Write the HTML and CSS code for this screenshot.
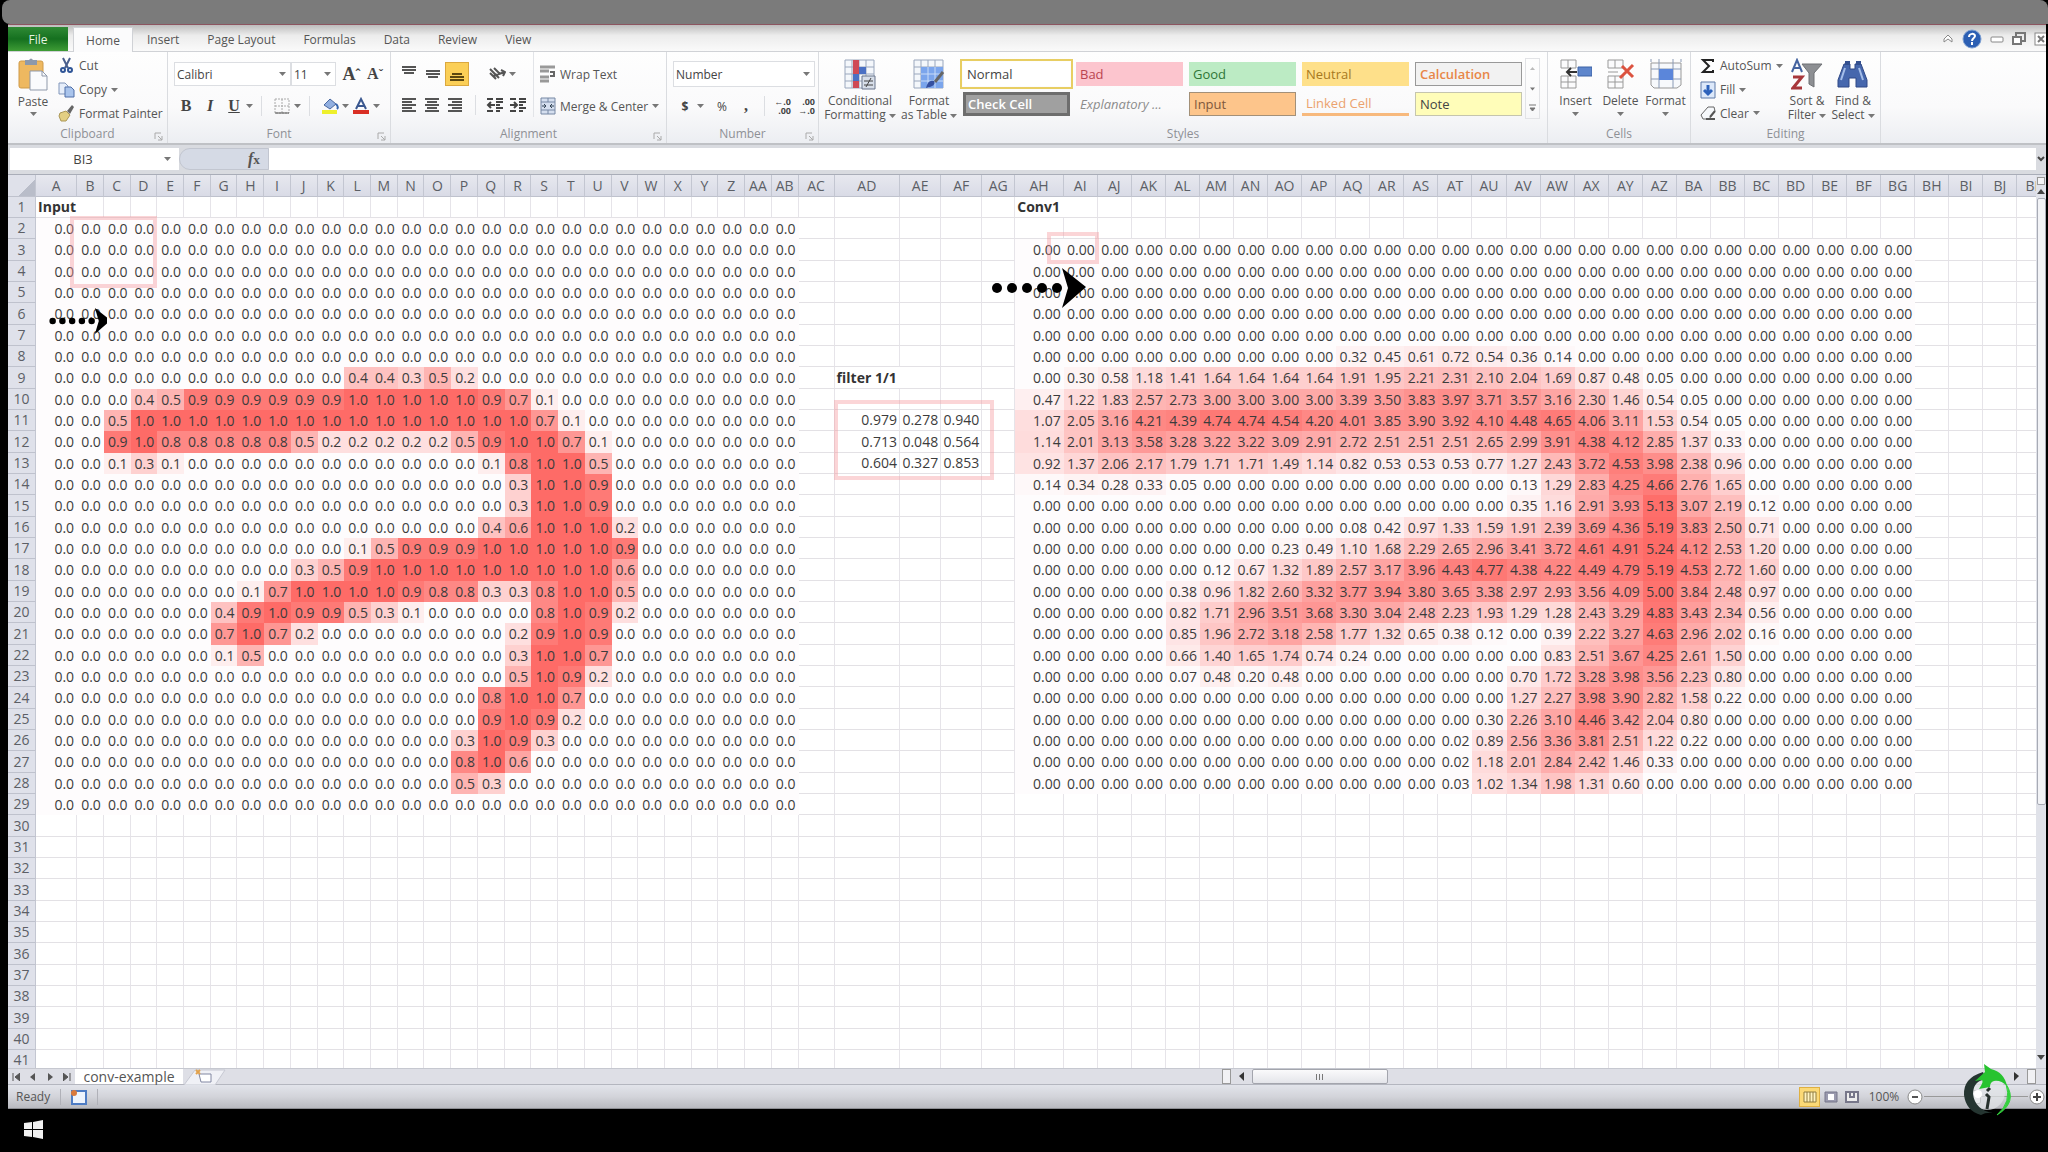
FILE: index.html
```html
<!DOCTYPE html>
<html lang="en">

<head>
    <meta charset="UTF-8" />
    <title>conv-example</title>
    <link rel="stylesheet" href="styles.css">
</head>

<body>
    <!-- shared icon shapes -->
    <svg class="defs" aria-hidden="true">
        <symbol id="caret" viewBox="0 0 7 4"><path d="M0 0h7L3.500 4z" fill="#777" /></symbol>
        <symbol id="launcher" viewBox="0 0 9 9"><path d="M1 7V1h6M4 4l4 4M8 4v4H4" fill="none" stroke="#aaa" /></symbol>
        <symbol id="grid" viewBox="0 0 32 32">
            <path d="M1 2h29v28H1z" fill="#f4f7fb" />
            <path d="M1 2h29v28H1zM1 9h29M1 16h29M1 23h29M8 2v28M15 2v28M22 2v28" fill="none" stroke="#9aa7bd" />
        </symbol>
    </svg>

    <div class="titlebar"></div>

    <div class="app">
        <nav class="tabs">
            <button class="tab file">File</button>
            <button class="tab active">Home</button>
            <button class="tab">Insert</button>
            <button class="tab">Page Layout</button>
            <button class="tab">Formulas</button>
            <button class="tab">Data</button>
            <button class="tab">Review</button>
            <button class="tab">View</button>
            <div class="window-buttons">
                <button aria-label="Minimize ribbon"><svg width="12" height="12"><path d="M2 9V6l4-4 4 4v3L6 6z" fill="#fff" stroke="#888" /></svg></button>
                <button aria-label="Help"><svg width="20" height="20"><circle cx="10" cy="10" r="9" fill="#2c5fb3" stroke="#7d9fd2" /><path d="M7 8c0-4 6-4 6-1 0 2-3 2-3 5M10 13v3" fill="none" stroke="#fff" stroke-width="2" /></svg></button>
                <button aria-label="Minimize"><svg width="14" height="12"><rect x="1" y="4" width="12" height="5" rx="1" fill="#fff" stroke="#888" /></svg></button>
                <button aria-label="Restore"><svg width="14" height="14"><path d="M4 4V1h9v8h-3" fill="none" stroke="#777" stroke-width="2" /><rect x="1" y="5" width="8" height="7" fill="#fff" stroke="#777" stroke-width="2" /></svg></button>
                <button aria-label="Close"><svg width="14" height="14"><rect x="1" y="1" width="12" height="12" fill="#fff" stroke="#888" /><path d="M4 4l6 6M10 4l-6 6" stroke="#777" stroke-width="2" /></svg></button>
            </div>
        </nav>

        <section class="ribbon">
            <div class="group clipboard">
                <div class="body">
                    <button class="big">
                        <svg width="32" height="34" viewBox="0 0 32 34"><rect x="2" y="3" width="24" height="27" rx="2" fill="#eeb860" stroke="#cf9a48" /><path d="M8 5V2h4q2-3 4 0h4v5H8z" fill="#8d99ab" /><path d="M13 13h12l5 5v14H13z" fill="#fafbfd" stroke="#8f99aa" /><path d="M25 13v5h5" fill="none" stroke="#8f99aa" /></svg>
                        <span>Paste</span>
                        <svg class="caret"><use href="#caret" /></svg>
                    </button>
                    <div class="stack">
                        <button><svg width="17" height="18"><path d="M5 1l5 10M12 1L7 11" stroke="#4a5f8c" stroke-width="2" /><circle cx="5" cy="13" r="2" fill="none" stroke="#2f5597" stroke-width="2" /><circle cx="12" cy="13" r="2" fill="none" stroke="#2f5597" stroke-width="2" /></svg>Cut</button>
                        <button><svg width="17" height="18"><path d="M1 2h6l3 3v8H1z" fill="#e6eefa" stroke="#8196ba" /><path d="M7 6h6l3 3v7H7z" fill="#a9c4ec" stroke="#4e6ea8" /></svg>Copy <svg class="caret"><use href="#caret" /></svg></button>
                        <button><svg width="17" height="18"><path d="M9 7l5-6 2 2-4 7z" fill="#666" /><path d="M2 9l6-2 4 4-4 6H3L1 12z" fill="#e3cf83" stroke="#ab9757" /></svg>Format Painter</button>
                    </div>
                </div>
                <div class="label">Clipboard<svg class="launcher"><use href="#launcher" /></svg></div>
            </div>

            <div class="group font">
                <div class="body rows">
                    <div class="line">
                        <label class="combo face"><select aria-label="Font"><option>Calibri</option></select><svg class="caret"><use href="#caret" /></svg></label>
                        <label class="combo size"><select aria-label="Font size"><option>11</option></select><svg class="caret"><use href="#caret" /></svg></label>
                        <button class="tool serif grow">A<sup>ˆ</sup></button>
                        <button class="tool serif shrink">A<sup>ˇ</sup></button>
                    </div>
                    <div class="line">
                        <button class="tool serif">B</button>
                        <button class="tool serif italic">I</button>
                        <button class="tool serif underline">U</button>
                        <svg class="caret"><use href="#caret" /></svg>
                        <i class="sep"></i>
                        <button class="tool" aria-label="Borders"><svg width="16" height="16"><path d="M1 1h14v14H1zM8 1v14M1 8h14" fill="none" stroke="#aaa" stroke-dasharray="2 1" /><path d="M1 15h14" stroke="#555" /></svg></button>
                        <svg class="caret"><use href="#caret" /></svg>
                        <i class="sep"></i>
                        <button class="tool" aria-label="Fill color"><svg width="18" height="18"><path d="M3 8l6-6 6 5-6 5z" fill="#91afe0" stroke="#4a68a0" /><path d="M15 7q3 3 1 5" fill="none" stroke="#3464ad" stroke-width="2" /><path d="M1 13h15v4H1z" fill="#eef02c" /></svg></button>
                        <svg class="caret"><use href="#caret" /></svg>
                        <button class="tool" aria-label="Font color"><svg width="18" height="18"><path d="M4 12L9 2l5 10M6 9h6" fill="none" stroke="#3a578f" stroke-width="2" /><path d="M1 13h16v4H1z" fill="#d92f25" /></svg></button>
                        <svg class="caret"><use href="#caret" /></svg>
                    </div>
                </div>
                <div class="label">Font<svg class="launcher"><use href="#launcher" /></svg></div>
            </div>

            <div class="group alignment">
                <div class="body">
                    <div class="rows align-icons">
                        <div class="line">
                            <button class="tool" aria-label="Top align"><svg width="16" height="16"><path d="M1 1h14M1 4h14M3 7h10" stroke="#555" stroke-width="2" /></svg></button>
                            <button class="tool" aria-label="Middle align"><svg width="16" height="16"><path d="M1 5h14M1 8h14M3 11h10" stroke="#555" stroke-width="2" /></svg></button>
                            <button class="tool on" aria-label="Bottom align"><svg width="16" height="16"><path d="M3 8h10M1 11h14M1 14h14" stroke="#5c4710" stroke-width="2" /></svg></button>
                            <button class="tool orient" aria-label="Orientation"><svg width="18" height="16"><path d="M2 3l9 9M2 7l6 6M6 2l6 6M5 10l12-4M13 4l4 2-2 4" fill="none" stroke="#555" stroke-width="2" /></svg></button>
                            <svg class="caret"><use href="#caret" /></svg>
                        </div>
                        <div class="line">
                            <button class="tool" aria-label="Align left"><svg width="16" height="16"><path d="M1 2h14M1 5h10M1 8h14M1 11h10M1 14h14" stroke="#555" stroke-width="2" /></svg></button>
                            <button class="tool" aria-label="Center"><svg width="16" height="16"><path d="M1 2h14M3 5h10M1 8h14M3 11h10M1 14h14" stroke="#555" stroke-width="2" /></svg></button>
                            <button class="tool" aria-label="Align right"><svg width="16" height="16"><path d="M1 2h14M5 5h10M1 8h14M5 11h10M1 14h14" stroke="#555" stroke-width="2" /></svg></button>
                            <i class="sep"></i>
                            <button class="tool" aria-label="Decrease indent"><svg width="18" height="16"><path d="M1 2h6M10 2h7M10 5h7M10 8h4M10 11h7M1 14h6M10 14h4" stroke="#444" stroke-width="2" /><path d="M9 8H2M5 5L2 8l3 3" fill="none" stroke="#444" stroke-width="2" /></svg></button>
                            <button class="tool" aria-label="Increase indent"><svg width="18" height="16"><path d="M1 2h6M10 2h7M10 5h7M10 8h4M10 11h7M1 14h6M10 14h4" stroke="#444" stroke-width="2" /><path d="M1 8h7M5 5l3 3-3 3" fill="none" stroke="#444" stroke-width="2" /></svg></button>
                        </div>
                    </div>
                    <div class="rows wraps">
                        <button><svg width="16" height="18"><path d="M0 2h15M0 6h9M0 12h9M0 16h9" stroke="#999" stroke-width="3" /><path d="M10 7h4v4h-4" fill="none" stroke="#666" stroke-width="2" /></svg>Wrap Text</button>
                        <button><svg width="16" height="18"><path d="M1 1h14v16H1z" fill="#d5dfef" stroke="#7788a4" /><path d="M1 5h14M1 13h14M8 1v4M8 13v4" stroke="#7788a4" /><path d="M2 9h4M14 9h-4M4 7l2 2-2 2M12 7l-2 2 2 2" fill="none" stroke="#345" /></svg>Merge &amp; Center <svg class="caret"><use href="#caret" /></svg></button>
                    </div>
                </div>
                <div class="label">Alignment<svg class="launcher"><use href="#launcher" /></svg></div>
            </div>

            <div class="group number">
                <div class="body rows">
                    <label class="combo format"><select aria-label="Number format"><option>Number</option></select><svg class="caret"><use href="#caret" /></svg></label>
                    <div class="line">
                        <button class="tool"><b>$</b></button>
                        <svg class="caret"><use href="#caret" /></svg>
                        <button class="tool percent">%</button>
                        <button class="tool serif">,</button>
                        <i class="sep"></i>
                        <button class="tool decimals"><b>←.0</b><b>.00</b></button>
                        <button class="tool decimals"><b>.00</b><b>→.0</b></button>
                    </div>
                </div>
                <div class="label">Number<svg class="launcher"><use href="#launcher" /></svg></div>
            </div>

            <div class="group styles">
                <div class="body">
                    <button class="big cond">
                        <svg width="32" height="32"><use href="#grid" /><path d="M9 2h6v14H9zM9 23h6v7H9z" fill="#cf4a55" /><path d="M15 9h7v7h-7zM9 16h6v7H9z" fill="#4a70c4" /><path d="M18 18h13v13H18z" fill="#d7dee9" stroke="#68758b" /><path d="M20 23h9M20 27h9M27 20l-5 9" stroke="#444" /></svg>
                        <span>Conditional<br>Formatting <svg class="caret"><use href="#caret" /></svg></span>
                    </button>
                    <button class="big astable">
                        <svg width="32" height="32"><use href="#grid" /><path d="M8 9h22v21H8z" fill="#7ba5ec" /><path d="M8 16h22M8 23h22M15 9v21M22 9v21" stroke="#c9dbf7" /><path d="M30 14l-8 10" stroke="#666" stroke-width="3" /><path d="M13 30q2-9 8-7 3 5-8 7z" fill="#3550a0" /></svg>
                        <span>Format<br>as Table <svg class="caret"><use href="#caret" /></svg></span>
                    </button>
                    <div class="gallery">
                        <button class="swatch normal">Normal</button>
                        <button class="swatch bad">Bad</button>
                        <button class="swatch good">Good</button>
                        <button class="swatch neutral">Neutral</button>
                        <button class="swatch calculation">Calculation</button>
                        <button class="swatch check">Check Cell</button>
                        <button class="swatch explanatory">Explanatory ...</button>
                        <button class="swatch input">Input</button>
                        <button class="swatch linked">Linked Cell</button>
                        <button class="swatch note">Note</button>
                    </div>
                    <div class="gallery-scroll">
                        <button aria-label="Previous styles"><svg width="5" height="3"><path d="M0 3h5L2.500 0z" fill="#bbb" /></svg></button>
                        <button aria-label="Next styles"><svg class="caret"><use href="#caret" /></svg></button>
                        <button aria-label="More styles"><svg width="7" height="8"><path d="M0 1h7M1 4h5L3.500 7z" fill="#777" stroke="#777" /></svg></button>
                    </div>
                </div>
                <div class="label">Styles</div>
            </div>

            <div class="group cells">
                <div class="body">
                    <button class="big">
                        <svg width="32" height="32"><path d="M1 2h15v8H1zM1 18h15v12H1zM8 2v8M8 18v12M1 24h15" fill="#fbfbfc" stroke="#999" /><path d="M18 9h14v9H18z" fill="#5e86cc" stroke="#3c62a5" /><path d="M17 14H7M11 10l-4 4 4 4" fill="none" stroke="#333" stroke-width="2" /></svg>
                        <span>Insert</span><svg class="caret"><use href="#caret" /></svg>
                    </button>
                    <button class="big">
                        <svg width="32" height="32"><path d="M3 2h15v8H3zM3 18h15v12H3zM10 2v8M10 18v12M3 24h15M3 14h10" fill="#fbfbfc" stroke="#999" /><path d="M17 8l11 11M28 7L15 20" stroke="#dc5340" stroke-width="3" /></svg>
                        <span>Delete</span><svg class="caret"><use href="#caret" /></svg>
                    </button>
                    <button class="big">
                        <svg width="34" height="32"><path d="M2 5h30v22l-4 3H5l-3-3z" fill="#f7f9fc" stroke="#999" /><path d="M2 11h30M2 21h30M10 1v29M24 1v29M2 1v3M32 1v3" stroke="#8a9ab5" /><path d="M10 11h14v11H10z" fill="#5b86da" /></svg>
                        <span>Format</span><svg class="caret"><use href="#caret" /></svg>
                    </button>
                </div>
                <div class="label">Cells</div>
            </div>

            <div class="group editing">
                <div class="body">
                    <div class="stack">
                        <button><svg width="16" height="16"><path d="M13 4V2H3l6 6-6 6h10v-2" fill="none" stroke="#222" stroke-width="2" /></svg>AutoSum <svg class="caret"><use href="#caret" /></svg></button>
                        <button><svg width="16" height="18"><path d="M1 1h14v16H1z" fill="#dce8fa" stroke="#5f7ba8" /><path d="M8 4v9M4 9l4 4 4-4" fill="none" stroke="#2d62bb" stroke-width="3" /></svg>Fill <svg class="caret"><use href="#caret" /></svg></button>
                        <button><svg width="16" height="16"><path d="M1 10l7-8h6l1 4-6 8H3z" fill="#f6f8fb" stroke="#666" /><path d="M6 14h9M10 12l5-6" stroke="#555" stroke-width="2" /></svg>Clear <svg class="caret"><use href="#caret" /></svg></button>
                    </div>
                    <button class="big">
                        <svg width="32" height="32"><path d="M1 14L6 2l5 12M3 10h6" fill="none" stroke="#4564a0" stroke-width="2" /><path d="M2 19h9L2 30h9" fill="none" stroke="#a8373b" stroke-width="3" /><path d="M11 6h20l-8 9v14l-5-3V15z" fill="#8d8f93" stroke="#6f7175" /></svg>
                        <span>Sort &amp;<br>Filter <svg class="caret"><use href="#caret" /></svg></span>
                    </button>
                    <button class="big">
                        <svg width="32" height="32"><path d="M7 6h6v5h5V6h6l6 16v7H19v-9h-7v9H1v-7z" fill="#4667ad" stroke="#2e4886" /><path d="M8 3h5v4H8zM19 3h5v4h-5z" fill="#34508f" /><path d="M8 10L4 22M22 10l4 12" stroke="#a5bee9" stroke-width="2" /></svg>
                        <span>Find &amp;<br>Select <svg class="caret"><use href="#caret" /></svg></span>
                    </button>
                </div>
                <div class="label">Editing</div>
            </div>
        </section>

        <div class="formula-bar">
            <input class="name-box" type="text" value="BI3" aria-label="Name box">
            <svg class="caret"><use href="#caret" /></svg>
            <div class="fx-area"><button aria-label="Insert function"><i>f</i><small>x</small></button></div>
            <input class="formula" type="text" aria-label="Formula">
            <button class="expand" aria-label="Expand formula bar"><svg width="8" height="6"><path d="M1 1l3 3 3-3" fill="none" stroke="#444" stroke-width="2" /></svg></button>
        </div>

        <main class="workspace">
            <div class="sheet">
                <table>
                    <colgroup id="cols"></colgroup>
                    <thead id="head"></thead>
                    <tbody id="rows"></tbody>
                </table>
                <div class="window input-window"></div>
                <div class="window filter-window"></div>
                <div class="window conv-window"></div>
                <svg class="arrow small-arrow" viewBox="0 0 88 40"><use href="#arrow" /></svg>
                <svg class="arrow big-arrow" viewBox="0 0 94 40">
                    <g id="arrow"><circle cx="5" cy="20" r="5" /><circle cx="20" cy="20" r="5" /><circle cx="35" cy="20" r="5" /><circle cx="50" cy="20" r="5" /><circle cx="65" cy="20" r="5" /><path d="M70 0l24 19-24 21 6-20z" /></g>
                </svg>
            </div>
            <div class="vscroll">
                <div class="split"></div>
                <svg width="8" height="5"><path d="M0 5h8L4 0z" fill="#444" /></svg>
                <div class="thumb"></div>
                <div class="space"></div>
                <svg width="8" height="5"><path d="M0 0h8L4 5z" fill="#444" /></svg>
            </div>
        </main>

        <div class="sheet-bar">
            <div class="sheet-nav">
                <button aria-label="First sheet"><svg width="8" height="8"><path d="M1 0v8M8 0v8L3 4z" fill="#555" stroke="#555" /></svg></button>
                <button aria-label="Previous sheet"><svg width="8" height="8"><path d="M6 0v8L1 4z" fill="#555" /></svg></button>
                <button aria-label="Next sheet"><svg width="8" height="8"><path d="M2 0v8l5-4z" fill="#555" /></svg></button>
                <button aria-label="Last sheet"><svg width="8" height="8"><path d="M7 0v8M0 0v8l5-4z" fill="#555" stroke="#555" /></svg></button>
            </div>
            <button class="sheet-tab">conv-example</button>
            <button class="new-sheet" aria-label="Insert sheet"><svg width="44" height="16"><path d="M1 16L12 1h30L32 16z" fill="#f0f1f6" stroke="#c6c8d2" /><path d="M16 5h12v8H18z" fill="#fff" stroke="#8187a2" /><path d="M13 1l4 4M17 1l-4 4" stroke="#e2a24c" stroke-width="2" /></svg></button>
            <div class="hscroll">
                <i class="handle"></i>
                <svg width="5" height="9"><path d="M5 0v9L0 4z" fill="#333" /></svg>
                <div class="hthumb"><i></i><i></i><i></i></div>
                <svg class="right" width="5" height="9"><path d="M0 0v9l5-5z" fill="#333" /></svg>
                <i class="handle"></i>
            </div>
        </div>

        <footer class="status">
            <span class="ready">Ready</span>
            <button class="macro" aria-label="Record macro"><svg width="18" height="16"><path d="M2 2h14v13H2z" fill="#eef4fd" stroke="#4e7cc4" stroke-width="2" /><circle cx="4" cy="4" r="3" fill="#d9793c" /></svg></button>
            <div class="views">
                <button class="view on" aria-label="Normal view"><svg width="14" height="12"><path d="M1 1h12v10H1zM4 1v10M7 1v10M10 1v10" fill="#fff3c0" stroke="#8f7c40" /></svg></button>
                <button class="view" aria-label="Page layout view"><svg width="14" height="12"><path d="M1 1h12v10H1z" fill="#9a9aae" stroke="#77778a" /><path d="M4 3h6v6H4z" fill="#fff" /></svg></button>
                <button class="view" aria-label="Page break view"><svg width="14" height="12"><path d="M1 1h12v10H1z" fill="#eee" stroke="#77778a" stroke-width="2" /><path d="M5 1v5h4V1" fill="none" stroke="#77778a" stroke-width="2" /></svg></button>
                <label class="zoom" for="zoom">100%</label>
                <button class="round" aria-label="Zoom out"><svg width="18" height="16"><circle cx="9" cy="8" r="7" fill="#fff" stroke="#888" /><path d="M6 8h6" stroke="#555" stroke-width="2" /></svg></button>
                <input id="zoom" type="range" min="0" max="100" value="50">
                <button class="round" aria-label="Zoom in"><svg width="18" height="16"><circle cx="9" cy="8" r="7" fill="#fff" stroke="#888" /><path d="M5 8h8M9 4v8" stroke="#444" stroke-width="2" /></svg></button>
            </div>
            <svg class="logo" viewBox="0 0 50 54">
                <circle cx="24" cy="28" r="18" fill="#e3e6e8" opacity=".7" />
                <path d="M20 8Q0 14 1 31q2 16 17 20 5-3 12-2-18-3-20-19Q10 17 23 15z" fill="#253531" />
                <path d="M12 17L22 8 21 0l7 5q13 3 16 17-6-6-13-5-4 1-4 6L16 25q6-9 2-9z" fill="#27c32f" />
                <path d="M43 20q12 18-9 31 15-13 9-31z" fill="#35d03e" stroke="#35d03e" />
                <circle cx="15" cy="30" r="4" fill="#fff" />
                <path d="M23 30l3 3-2 12M27 24l-3 3" fill="none" stroke="#27312d" stroke-width="3" />
            </svg>
        </footer>
    </div>

    <div class="taskbar">
        <button aria-label="Start"><svg width="20" height="20"><path d="M0 3l8-1v7H0zM9 2l10-2v9H9zM0 10h8v7l-8-1zM9 10h10v9L9 17z" fill="#f2f2f2" /></svg></button>
    </div>

    <script>
        // every entry is [first column, values...], keyed by sheet row
        const input = {
            9: [[11, .4, .4, .3, .5, .2]],
            10: [[3, .4, .5, .9, .9, .9, .9, .9, .9, 1, 1, 1, 1, 1, .9, .7, .1]],
            11: [[2, .5, 1, 1, 1, 1, 1, 1, 1, 1, 1, 1, 1, 1, 1, 1, 1, .7, .1]],
            12: [[2, .9, 1, .8, .8, .8, .8, .8, .5, .2, .2, .2, .2, .2, .5, .9, 1, 1, .7, .1]],
            13: [[2, .1, .3, .1], [16, .1, .8, 1, 1, .5]],
            14: [[17, .3, 1, 1, .9]],
            15: [[17, .3, 1, 1, .9]],
            16: [[16, .4, .6, 1, 1, 1, .2]],
            17: [[11, .1, .5, .9, .9, .9, 1, 1, 1, 1, 1, .9]],
            18: [[9, .3, .5, .9, 1, 1, 1, 1, 1, 1, 1, 1, 1, .6]],
            19: [[7, .1, .7, 1, 1, 1, 1, .9, .8, .8, .3, .3, .8, 1, 1, .5]],
            20: [[6, .4, .9, 1, .9, .9, .5, .3, .1], [18, .8, 1, .9, .2]],
            21: [[6, .7, 1, .7, .2], [17, .2, .9, 1, .9]],
            22: [[6, .1, .5], [17, .3, 1, 1, .7]],
            23: [[17, .5, 1, .9, .2]],
            24: [[16, .8, 1, 1, .7]],
            25: [[16, .9, 1, .9, .2]],
            26: [[15, .3, 1, .9, .3]],
            27: [[15, .8, 1, .6]],
            28: [[15, .5, .3]]
        };

        const conv = {
            8: [[9, .32, .45, .61, .72, .54, .36, .14]],
            9: [[1, .30, .58, 1.18, 1.41, 1.64, 1.64, 1.64, 1.64, 1.91, 1.95, 2.21, 2.31, 2.10, 2.04, 1.69, .87, .48, .05]],
            10: [[0, .47, 1.22, 1.83, 2.57, 2.73, 3, 3, 3, 3, 3.39, 3.50, 3.83, 3.97, 3.71, 3.57, 3.16, 2.30, 1.46, .54, .05]],
            11: [[0, 1.07, 2.05, 3.16, 4.21, 4.39, 4.74, 4.74, 4.54, 4.20, 4.01, 3.85, 3.90, 3.92, 4.10, 4.48, 4.65, 4.06, 3.11, 1.53, .54, .05]],
            12: [[0, 1.14, 2.01, 3.13, 3.58, 3.28, 3.22, 3.22, 3.09, 2.91, 2.72, 2.51, 2.51, 2.51, 2.65, 2.99, 3.91, 4.38, 4.12, 2.85, 1.37, .33]],
            13: [[0, .92, 1.37, 2.06, 2.17, 1.79, 1.71, 1.71, 1.49, 1.14, .82, .53, .53, .53, .77, 1.27, 2.43, 3.72, 4.53, 3.98, 2.38, .96]],
            14: [[0, .14, .34, .28, .33, .05], [14, .13, 1.29, 2.83, 4.25, 4.66, 2.76, 1.65]],
            15: [[14, .35, 1.16, 2.91, 3.93, 5.13, 3.07, 2.19, .12]],
            16: [[9, .08, .42, .97, 1.33, 1.59, 1.91, 2.39, 3.69, 4.36, 5.19, 3.83, 2.50, .71]],
            17: [[7, .23, .49, 1.10, 1.68, 2.29, 2.65, 2.96, 3.41, 3.72, 4.61, 4.91, 5.24, 4.12, 2.53, 1.20]],
            18: [[5, .12, .67, 1.32, 1.89, 2.57, 3.17, 3.96, 4.43, 4.77, 4.38, 4.22, 4.49, 4.79, 5.19, 4.53, 2.72, 1.60]],
            19: [[4, .38, .96, 1.82, 2.60, 3.32, 3.77, 3.94, 3.80, 3.65, 3.38, 2.97, 2.93, 3.56, 4.09, 5, 3.84, 2.48, .97]],
            20: [[4, .82, 1.71, 2.96, 3.51, 3.68, 3.30, 3.04, 2.48, 2.23, 1.93, 1.29, 1.28, 2.43, 3.29, 4.83, 3.43, 2.34, .56]],
            21: [[4, .85, 1.96, 2.72, 3.18, 2.58, 1.77, 1.32, .65, .38, .12, 0, .39, 2.22, 3.27, 4.63, 2.96, 2.02, .16]],
            22: [[4, .66, 1.40, 1.65, 1.74, .74, .24], [15, .83, 2.51, 3.67, 4.25, 2.61, 1.50]],
            23: [[4, .07, .48, .20, .48], [14, .70, 1.72, 3.28, 3.98, 3.56, 2.23, .80]],
            24: [[14, 1.27, 2.27, 3.98, 3.90, 2.82, 1.58, .22]],
            25: [[13, .30, 2.26, 3.10, 4.46, 3.42, 2.04, .80]],
            26: [[12, .02, .89, 2.56, 3.36, 3.81, 2.51, 1.22, .22]],
            27: [[12, .02, 1.18, 2.01, 2.84, 2.42, 1.46, .33]],
            28: [[12, .03, 1.02, 1.34, 1.98, 1.31, .60]]
        };

        const filter = {
            11: ['0.979', '0.278', '0.940'],
            12: ['0.713', '0.048', '0.564'],
            13: ['0.604', '0.327', '0.853']
        };

        const labels = { '1-0': 'Input', '1-33': 'Conv1', '9-29': 'filter 1/1' };
        const CONV = 33;      // column AH
        const COLUMNS = 63;   // A to BK

        function columnName(i) {
            const last = String.fromCharCode(65 + i % 26);
            return i < 26 ? last : String.fromCharCode(64 + Math.floor(i / 26)) + last;
        }

        // relative widths, in thirds of a pixel
        function columnWeight(i) {
            if (i === 0) return 123;
            if (i < 28) return 80;
            if (i <= CONV) return [108, 196, 123, 123, 99, 145][i - 28];
            return 102;
        }

        function lookup(data, row, col) {
            for (const [start, ...values] of data[row] || []) {
                if (col >= start && col < start + values.length) return values[col - start];
            }
            return 0;
        }

        function shade(v) {
            return `rgb(254, ${Math.round(252 - 145 * v)}, ${Math.round(253 - 150 * v)})`;
        }

        function cell(row, col) {
            if (col < 28 && row >= 2 && row <= 29) {
                const v = lookup(input, row, col);
                return `<td class="value" style="background:${shade(v)}">${v.toFixed(1)}</td>`;
            }
            if (col >= CONV && col < CONV + 26 && row >= 3 && row <= 28) {
                const v = lookup(conv, row, col - CONV);
                return `<td class="value" style="background:${shade(v / 5.24)}">${v.toFixed(2)}</td>`;
            }
            if (filter[row] && col >= 29 && col < 32) return `<td>${filter[row][col - 29]}</td>`;
            const label = labels[row + '-' + col];
            return label ? `<td class="title">${label}</td>` : '<td></td>';
        }

        let total = 84;
        for (let i = 0; i < COLUMNS; i++) total += columnWeight(i);

        let cols = `<col style="width:${84 / total * 100}%">`;
        let head = '<tr><th class="corner"></th>';
        for (let i = 0; i < COLUMNS; i++) {
            cols += `<col style="width:${columnWeight(i) / total * 100}%">`;
            head += `<th>${columnName(i)}</th>`;
        }

        let rows = '';
        for (let r = 1; r <= 41; r++) {
            rows += `<tr><th>${r}</th>`;
            for (let i = 0; i < COLUMNS; i++) rows += cell(r, i);
            rows += '</tr>';
        }

        document.getElementById('cols').innerHTML = cols;
        document.getElementById('head').innerHTML = head + '</tr>';
        document.getElementById('rows').innerHTML = rows;
    </script>
</body>

</html>
```

FILE: styles.css
```css
* {
    box-sizing: border-box;
}

body {
    margin: 0;
    height: 100vh;
    display: flex;
    flex-direction: column;
    background: #000;
    color: #555;
    font-family: "Open Sans", "Noto Sans", sans-serif;
    font-size: 12px;
    overflow: hidden;
}

button,
input,
select {
    font: inherit;
    color: inherit;
    background: none;
    border: none;
    padding: 0;
    margin: 0;
    border-radius: 0;
    appearance: none;
}

svg {
    flex: none;
}

.defs {
    position: absolute;
    width: 0;
    height: 0;
}

.caret {
    width: 7px;
    height: 4px;
    vertical-align: middle;
}

.titlebar {
    height: 24px;
    flex: none;
    margin-left: 2px;
    background: #7b7b7b;
    border-radius: 8px 8px 0 8px;
}

.app {
    flex: 1;
    min-height: 0;
    margin: 0 2px 0 8px;
    display: flex;
    flex-direction: column;
    background: #dcdfe8;
}

/* ribbon tabs */
.tabs {
    height: 28px;
    flex: none;
    display: flex;
    padding-top: 2px;
    background: linear-gradient(#bdbdbd, #ececec 40%, #fafafa);
    border-top: 1px solid #8c5560;
    border-bottom: 1px solid #d0d2d6;
}

.tab {
    padding: 0 14px;
}

.tab.file {
    width: 60px;
    margin-right: 5px;
    color: #e6f3e0;
    background: linear-gradient(#2f8a35, #15701f 50%, #3e9c35);
}

.tab.active {
    width: 60px;
    margin-bottom: -1px;
    padding: 0;
    background: #fbfbfc;
    border: 1px solid #d0d2d6;
    border-bottom: none;
}

.window-buttons {
    margin-left: auto;
    display: flex;
    align-items: center;
    gap: 8px;
    width: 104px;
    overflow: hidden;
}

.window-buttons button {
    display: flex;
}

/* ribbon */
.ribbon {
    height: 93px;
    flex: none;
    display: flex;
    background: linear-gradient(#fefefe, #fafafb 60%, #eceef2);
    border-bottom: 2px solid #bfc1c5;
}

.group {
    display: flex;
    flex-direction: column;
    flex: none;
    border-right: 1px solid #dadce0;
}

.clipboard { width: 160px; }
.font { width: 223px; }
.alignment { width: 276px; }
.number { width: 152px; }
.styles { width: 729px; }
.cells { width: 143px; }
.editing { width: 190px; }

.body {
    height: 73px;
    display: flex;
}

.label {
    display: flex;
    justify-content: center;
    align-items: center;
    line-height: 18px;
    color: #8e9095;
    position: relative;
}

.launcher {
    position: absolute;
    right: 4px;
    bottom: 2px;
    width: 9px;
    height: 9px;
}

.big {
    display: flex;
    flex-direction: column;
    align-items: center;
    line-height: 14px;
    padding-top: 6px;
    gap: 4px;
}

.clipboard .big {
    width: 50px;
    gap: 3px;
}

.stack {
    display: flex;
    flex-direction: column;
    padding-top: 2px;
}

.stack button {
    height: 24px;
    display: flex;
    align-items: center;
    gap: 4px;
    white-space: nowrap;
}

.rows {
    display: flex;
    flex-direction: column;
    gap: 6px;
    padding: 9px 3px 0 6px;
}

.line {
    display: flex;
    align-items: center;
    height: 26px;
}

.combo {
    display: flex;
    align-items: center;
    height: 24px;
    padding: 0 4px 0 2px;
    border: 1px solid #dcdee2;
    background: #fff;
    color: #444;
}

.combo select {
    flex: 1;
    min-width: 0;
}

.face { width: 118px; }
.size { width: 45px; }
.format { width: 142px; height: 26px; }

.tool {
    width: 24px;
    height: 24px;
    display: flex;
    align-items: center;
    justify-content: center;
    color: #444;
}

.serif {
    font-family: "Liberation Serif", serif;
    font-weight: bold;
    font-size: 16px;
}

.grow {
    font-size: 18px;
    margin-left: 4px;
}

.percent {
    margin-left: 6px;
}

.italic { font-style: italic; }
.underline { text-decoration: underline; }

.tool.on {
    background: #fbcf57;
    border: 1px solid #dba83f;
}

.orient {
    margin-left: 16px;
}

.sep {
    width: 1px;
    height: 20px;
    margin: 0 8px;
    background: #dcdee2;
}

.number .sep {
    margin: 0 2px 0 6px;
}

.align-icons {
    width: 143px;
    border-right: 1px solid #e2e4e8;
    margin-bottom: 8px;
}

.wraps button {
    height: 26px;
    display: flex;
    align-items: center;
    gap: 4px;
    white-space: nowrap;
}

.decimals {
    flex-direction: column;
    align-items: flex-end;
    font-size: 9px;
    line-height: 9px;
}

.cond {
    width: 82px;
}

.astable {
    width: 56px;
}

.gallery {
    display: grid;
    grid-template-columns: repeat(5, 107px);
    grid-auto-rows: 24px;
    gap: 6px;
    padding: 10px 0 0 6px;
}

.swatch {
    text-align: left;
    padding-left: 4px;
    font-size: 13px;
    white-space: nowrap;
}

.normal {
    background: #fff;
    color: #444;
    outline: 2px solid #e8ce63;
    outline-offset: 1px;
}

.bad { background: #fcc5ce; color: #ba4450; }
.good { background: #bcebc4; color: #2f7638; }
.neutral { background: #fee08a; color: #a77921; }
.calculation { background: #f2f2f2; color: #e88647; border: 1px solid #999; font-weight: 600; }
.check { background: #a0a0a0; color: #fff; border: 3px solid #6d6d6d; padding-left: 2px; font-weight: 600; line-height: 16px; }
.explanatory { color: #8c8c8c; font-style: italic; }
.input { background: #fdc58b; color: #80583b; border: 1px solid #a39078; }
.linked { color: #eba26e; border-bottom: 3px solid #f7b97d; }
.note { background: #fffdb9; color: #444; border: 1px solid #c5c5ae; }

.gallery-scroll {
    width: 15px;
    margin: 6px 0 6px 3px;
    display: flex;
    flex-direction: column;
    border: 1px solid #e2e3e6;
}

.gallery-scroll button {
    flex: 1;
    display: flex;
    align-items: center;
    justify-content: center;
}

.gallery-scroll .caret {
    width: 5px;
}

.cells .body {
    padding-left: 5px;
}

.cells .big {
    width: 45px;
}

.editing .body {
    padding-left: 9px;
}

.editing .stack {
    width: 84px;
}

.editing .big {
    width: 46px;
}

/* formula bar */
.formula-bar {
    height: 30px;
    flex: none;
    display: flex;
    align-items: center;
    padding: 3px 0 5px 2px;
    border-bottom: 1px solid #a9adb8;
    background: #d9dbe0;
}

.formula-bar input,
.formula-bar .caret {
    height: 22px;
    background: #fff;
}

.formula-bar .name-box {
    width: 146px;
    text-align: center;
    font-size: 13px;
    color: #444;
}

.formula-bar .caret {
    width: 23px;
    padding: 8px;
}

.fx-area {
    width: 90px;
    height: 22px;
    padding-right: 8px;
    text-align: right;
    background: #d5dae5;
    border: 1px solid #c2c6d0;
    border-radius: 12px 0 0 12px;
}

.fx-area button {
    font-family: "Liberation Serif", serif;
    font-weight: bold;
    font-size: 16px;
    line-height: 20px;
}

.formula-bar .formula {
    flex: 1;
    min-width: 0;
    padding: 0 6px;
}

.expand {
    width: 10px;
    height: 22px;
    display: flex;
    align-items: center;
    justify-content: center;
}

/* sheet */
.workspace {
    flex: 1;
    min-height: 0;
    display: flex;
    background: #fff;
}

.sheet {
    flex: 1;
    min-width: 0;
    position: relative;
    overflow: hidden;
}

table {
    /* last column runs under the scrollbar */
    width: calc(100% + 16px);
    table-layout: fixed;
    border-collapse: separate;
    border-spacing: 0;
    font-size: 14px;
}

th,
td {
    padding: 0 2px 0 0;
    line-height: 20px;
    height: 21px;
    white-space: nowrap;
}

tbody tr:nth-child(3n) td,
tbody tr:nth-child(3n) th {
    height: 22px;
}

th {
    padding: 0;
    font-weight: normal;
    text-align: center;
    color: #5c5f66;
    background: #dfe1ea;
    border-right: 1px solid #c3c6d1;
    border-bottom: 1px solid #bfc2cd;
}

thead th {
    height: 22px;
    background: linear-gradient(#e7e8ef, #d9dbe6);
}

.corner {
    background: linear-gradient(135deg, #dfe1ea 65%, #b9bdc9 65%);
}

td {
    text-align: right;
    color: #3c3c3c;
    border-right: 1px solid #e6e4e9;
    border-bottom: 1px solid #e3e1e5;
}

td.value {
    border: none;
    padding-right: 3px;
}

td.title {
    text-align: left;
    font-weight: bold;
    color: #333;
    border-right: none;
    padding-left: 2px;
}

.window {
    position: absolute;
    border: 4px solid rgba(244, 150, 155, 0.4);
}

.input-window {
    left: 62px;
    top: 41px;
    width: 87px;
    height: 72px;
}

.filter-window {
    left: 826px;
    top: 225px;
    width: 160px;
    height: 80px;
}

.conv-window {
    left: 1039px;
    top: 57px;
    width: 52px;
    height: 32px;
}

.arrow {
    position: absolute;
    fill: #000;
}

.big-arrow {
    left: 984px;
    top: 93px;
    width: 94px;
    height: 40px;
}

.small-arrow {
    left: 41px;
    top: 133px;
    width: 58px;
    height: 26px;
}

.vscroll {
    width: 10px;
    display: flex;
    flex-direction: column;
    align-items: center;
    gap: 4px;
    padding: 2px 0 8px;
    background: #e0e2e9;
}

.split {
    width: 8px;
    height: 8px;
    border: 1px solid #999;
    background: #f4f4f6;
}

.thumb {
    width: 9px;
    flex: 5;
    border: 1px solid #a8abb5;
    border-radius: 2px;
    background: #f2f3f6;
}

.space {
    flex: 2;
}

/* sheet tabs and horizontal scroll */
.sheet-bar {
    height: 17px;
    flex: none;
    display: flex;
    background: #dedfe6;
    border-top: 1px solid #c6c8d0;
    border-bottom: 1px solid #b4b6bf;
}

.sheet-nav {
    width: 67px;
    display: flex;
    align-items: center;
    justify-content: space-around;
}

.sheet-nav button {
    display: flex;
}

.sheet-tab {
    width: 108px;
    background: #fff;
    font-size: 14px;
    line-height: 14px;
}

.new-sheet {
    display: flex;
}

.hscroll {
    margin-left: auto;
    width: calc(40% + 9px);
    display: flex;
    align-items: center;
    gap: 8px;
    padding-right: 10px;
}

.handle {
    width: 9px;
    height: 15px;
    border: 1px solid #999;
    background: #f1f1f4;
}

.hthumb {
    width: 136px;
    height: 15px;
    display: flex;
    align-items: center;
    justify-content: center;
    gap: 2px;
    border: 1px solid #a3a5ad;
    border-radius: 2px;
    background: linear-gradient(#fafafb, #e4e5ea);
}

.hthumb i {
    width: 1px;
    height: 6px;
    background: #777;
}

.hscroll .right {
    margin-left: auto;
}

/* status bar */
.status {
    height: 24px;
    flex: none;
    display: flex;
    align-items: center;
    padding-left: 8px;
    background: linear-gradient(#e2e4eb, #d3d4da 50%, #b9bac0);
    border-bottom: 1px solid #8d8e93;
    position: relative;
}

.ready {
    width: 44px;
}

.macro {
    width: 38px;
    height: 16px;
    border-left: 1px solid #b0b1b8;
    border-right: 1px solid #b0b1b8;
}

.macro svg {
    display: block;
    margin: 0 auto;
}

.views {
    margin-left: auto;
    display: flex;
    align-items: center;
}

.view {
    width: 21px;
    height: 20px;
    display: flex;
    align-items: center;
    justify-content: center;
}

.view.on {
    background: #fbd976;
    border: 1px solid #dfb042;
}

.zoom {
    width: 44px;
    text-align: center;
}

.round {
    display: flex;
}

.views input {
    width: 104px;
    height: 16px;
    background: linear-gradient(#999, #999) center / 100% 1px no-repeat;
}

.views input::-webkit-slider-thumb {
    appearance: none;
    width: 9px;
    height: 14px;
    background: #f2f2f2;
    border: 1px solid #888;
    border-radius: 2px;
}

.logo {
    position: absolute;
    right: 33px;
    bottom: -10px;
    width: 50px;
    height: 54px;
}

.taskbar {
    height: 43px;
    flex: none;
    padding: 11px 0 0 24px;
}

.taskbar svg {
    display: block;
}
```
